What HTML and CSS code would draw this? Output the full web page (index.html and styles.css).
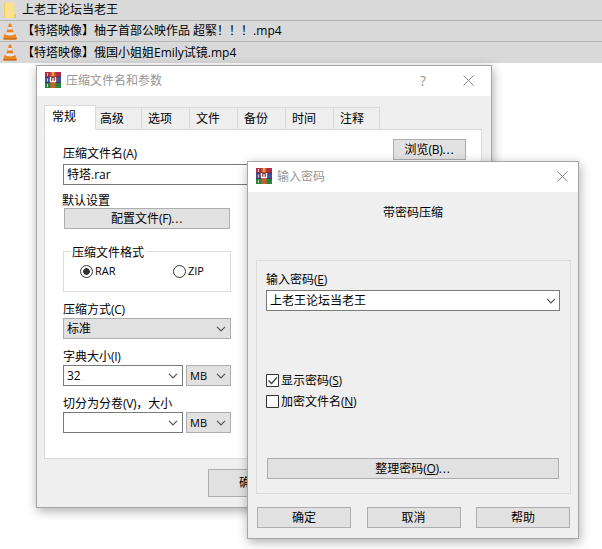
FILE: index.html
```html
<!DOCTYPE html>
<html lang="zh-CN">
<head>
<meta charset="utf-8">
<title>压缩文件名和参数</title>
<link rel="stylesheet" href="styles.css">
</head>
<body>
<svg class="defs" width="0" height="0" aria-hidden="true">
  <symbol id="cone" viewBox="0 0 14 17">
    <path d="M1.300 11.300h11.400l1.100 4.200q-.2.900-1 .9H1.200q-.8 0-1-.9z" fill="#ee8a22"/>
    <path d="M.3 15h13.400l-.3 1.400H.6z" fill="#cf6a14"/>
    <path d="M6 .8q1-.7 2 0l3.400 11.800q-4.400 2.200-8.800 0z" fill="#e87d22"/>
    <path d="M5.100 3.900h3.800l.8 2.700H4.300zM3.500 9.200h7l.8 2.600q-4.300 1.500-8.600 0z" fill="#e9e6e2"/>
  </symbol>
  <symbol id="rar" viewBox="0 0 16 16">
    <path d="M0 0h16v5H0z" fill="#b32c4c"/>
    <path d="M0 5h16v6H0z" fill="#4350a5"/>
    <path d="M0 11h16v5H0z" fill="#27853e"/>
    <path d="M0 5h16M0 10.500h16" stroke="#3a2f45" stroke-width=".8"/>
    <path d="M2.500 1v3M2.500 6.500v3M2.500 12v3" stroke="#dccfb4"/>
    <path d="M5.500 0h5v16h-5z" fill="#c8622a"/>
    <path d="M7 0h2v4H7z" fill="#f0a24a"/>
    <path d="M4.500 4.500h7v6h-7z" fill="#8d3a34"/>
    <path d="M5.500 5v4.500h5V5M8 6v3.500" fill="none" stroke="#f5eee8" stroke-width="1.300"/>
  </symbol>
  <symbol id="close" viewBox="0 0 11 11">
    <path d="M.5.5l10 10M10.500.5l-10 10" fill="none" stroke="#888" stroke-width="1"/>
  </symbol>
  <symbol id="chev" viewBox="0 0 10 6">
    <path d="M1 .8l4 4 4-4" fill="none" stroke="#555" stroke-width="1.200"/>
  </symbol>
</svg>

<ul class="files">
  <li class="file"><svg class="file-icon" viewBox="0 0 14 17"><path d="M1 .5h10.500v12H13V16H1z" fill="#f9e08a"/><path d="M11 12h2v4h-2z" fill="#ebc75c"/><path d="M1 .5h1V16H1z" fill="#efd06c"/></svg><span>上老王论坛当老王</span></li>
  <li class="file"><svg class="file-icon"><use href="#cone"/></svg><span>【特塔映像】柚子首部公映作品 超緊！！！.mp4</span></li>
  <li class="file"><svg class="file-icon"><use href="#cone"/></svg><span>【特塔映像】俄国小姐姐Emily试镜.mp4</span></li>
</ul>

<section class="window archive">
  <header class="titlebar">
    <svg class="app-icon"><use href="#rar"/></svg><h1 class="title">压缩文件名和参数</h1>
    <span class="help">?</span><svg class="close"><use href="#close"/></svg>
  </header>
  <nav class="tabs">
    <span class="tab active">常规</span><span class="tab">高级</span><span class="tab">选项</span><span class="tab">文件</span><span class="tab">备份</span><span class="tab">时间</span><span class="tab last">注释</span>
  </nav>
  <div class="panel">
    <div class="name-row"><span class="label">压缩文件名<span class="key">(A)</span></span><button class="btn browse"><span>浏览<span class="key">(B)</span><span class="dots">...</span></span></button></div>
    <div class="box name">特塔.rar</div>
    <div class="column">
      <span class="label profile-label">默认设置</span>
      <button class="btn profile"><span>配置文件<span class="key">(F)</span><span class="dots">...</span></span></button>
      <div class="format">
        <span class="legend">压缩文件格式</span>
        <div class="radios">
          <span class="option"><i class="radio on"></i>RAR</span>
          <span class="option"><i class="radio"></i>ZIP</span>
        </div>
      </div>
      <span class="label">压缩方式<span class="key">(C)</span></span>
      <div class="box grey">标准<svg class="chev"><use href="#chev"/></svg></div>
      <span class="label">字典大小<span class="key">(I)</span></span>
      <div class="pair"><div class="box">32<svg class="chev"><use href="#chev"/></svg></div><div class="box grey unit">MB<svg class="chev"><use href="#chev"/></svg></div></div>
      <span class="label">切分为分卷<span class="key">(V)</span>，大小</span>
      <div class="pair"><div class="box"><svg class="chev"><use href="#chev"/></svg></div><div class="box grey unit">MB<svg class="chev"><use href="#chev"/></svg></div></div>
    </div>
  </div>
  <footer class="archive-actions"><button class="btn">确定</button></footer>
</section>

<section class="window password">
  <header class="titlebar">
    <svg class="app-icon"><use href="#rar"/></svg><h1 class="title">输入密码</h1>
    <svg class="close"><use href="#close"/></svg>
  </header>
  <p class="heading">带密码压缩</p>
  <div class="group">
    <span class="label">输入密码<span class="key">(<u>E</u>)</span></span>
    <div class="box">上老王论坛当老王<svg class="chev"><use href="#chev"/></svg></div>
    <div class="checks">
      <span class="option"><svg class="check" viewBox="0 0 13 13"><path d="M2.500 6.500l3 3 5.500-6" fill="none" stroke="#444" stroke-width="1.300"/><path d="M.5.5h12v12H.5z" fill="none" stroke="#333"/></svg><span>显示密码<span class="key">(<u>S</u>)</span></span></span>
      <span class="option"><svg class="check" viewBox="0 0 13 13"><path d="M.5.5h12v12H.5z" fill="none" stroke="#333"/></svg><span>加密文件名<span class="key">(<u>N</u>)</span></span></span>
    </div>
    <button class="btn organize"><span>整理密码<span class="key">(<u>O</u>)</span><span class="dots">...</span></span></button>
  </div>
  <footer class="actions"><button class="btn">确定</button><button class="btn">取消</button><button class="btn">帮助</button></footer>
</section>
</body>
</html>
```
FILE: styles.css
```css
* { box-sizing: border-box; }
body {
  margin: 0;
  height: 549px;
  overflow: hidden;
  position: relative;
  background: #fff;
  color: #000;
  font: 12px/18px "Open Sans", "Noto Sans CJK SC", sans-serif;
  white-space: nowrap;
}
svg { display: block; flex: none; }
.defs { position: absolute; }
u { text-underline-offset: 1px; text-decoration-thickness: 1px; }
.key { letter-spacing: -.3px; }
.dots { letter-spacing: .8px; }

.files { list-style: none; margin: 0; padding: 0; background: #d8d9d8; }
.file {
  display: flex;
  align-items: center;
  gap: 5px;
  height: 21px;
  padding-left: 3px;
  border-bottom: 1px solid #b4b7b6;
}
.file:last-child { border-bottom: 0; }
.file-icon { width: 14px; height: 17px; }

.window {
  position: absolute;
  background: #efefef;
  border: 1px solid #a6a6a6;
  box-shadow: 1px 3px 10px rgba(0, 0, 0, .32);
}
.archive { left: 36px; top: 65px; width: 456px; height: 443px; }
.password { left: 247px; top: 161px; width: 332px; height: 378px; }
.titlebar {
  display: flex;
  align-items: center;
  height: 30px;
  padding: 0 10px 0 8px;
  background: #fff;
  color: #969696;
}
.app-icon { width: 16px; height: 16px; margin: -2px 5px 0 0; }
.title { margin: 0; font-size: 12px; font-weight: 400; }
.help { margin-left: auto; margin-right: 37px; font-size: 14px; }
.close { width: 11px; height: 11px; margin-top: -2px; }
.archive .close { margin-right: 7px; }
.password .close { margin-left: auto; }

.tabs { display: flex; align-items: flex-end; margin: 9px 0 -1px 7px; height: 25px; position: relative; }
.tab {
  width: 48px;
  height: 23px;
  padding: 2px 0 0 6px;
  border: 1px solid #dadada;
  border-left: 0;
}
.tab.active { width: 52px; height: 25px; padding: 2px 0 0 7px; background: #fff; border-left: 1px solid #dadada; border-bottom-color: #fff; }
.tab:nth-child(2) { width: 46px; padding-left: 4px; }
.tab.last { width: 46px; }

.panel {
  width: 438px;
  height: 330px;
  margin-left: 7px;
  padding: 9px 15px 0 18px;
  background: #fff;
  border: 1px solid #dadada;
}
.label { display: block; height: 18px; padding-top: 1px; }
.name-row { display: flex; justify-content: space-between; height: 25px; align-items: flex-start; }
.name-row .label { padding-top: 6px; }
.btn {
  display: flex;
  align-items: center;
  justify-content: center;
  height: 21px;
  margin: 0;
  padding: 0;
  background: #e1e1e1;
  border: 1px solid #adadad;
  color: #000;
  font: inherit;
}
.panel .btn, .organize { padding-top: 1px; }
.browse { width: 73px; }
.box {
  display: flex;
  align-items: center;
  flex: 1;
  height: 21px;
  padding: 0 4px 0 3px;
  background: #fff;
  border: 1px solid #7a7a7a;
}
.name { width: 402px; }
.chev { width: 10px; height: 6px; margin-left: auto; }
.grey { background: #e1e1e1; border-color: #adadad; }
.column { width: 168px; padding-top: 5px; }
.profile { width: 166px; margin-left: 1px; }
.profile-label { margin-left: -1px; padding-top: 2px; }
.format { height: 41px; margin: 22px 0 8px; border: 1px solid #dcdcdc; }
.legend {
  display: block;
  width: max-content;
  height: 18px;
  margin: -8px 0 0 6px;
  padding: 0 2px;
  background: #fff;
}
.radios { display: flex; padding-left: 16px; font-size: 11px; }
.radios .option { flex: none; width: 93px; height: 18px; }
.radios .option:last-child { width: 50px; }
.option { display: flex; align-items: center; gap: 2px; height: 21px; }
.radio { width: 13px; height: 13px; border: 1px solid #333; border-radius: 50%; background: #fff; }
.radio.on { background: radial-gradient(circle, #333 3px, #fff 3.700px); }
.column > .box { height: 21px; margin-bottom: 8px; }
.pair { display: flex; gap: 3px; margin-bottom: 8px; }
.unit { flex: 0 0 45px; font-size: 11px; }
.archive-actions { padding: 10px 0 0 171px; }
.archive-actions .btn { width: 86px; height: 28px; }

.heading { margin: 12px 0 38px; text-align: center; height: 18px; }
.group { height: 234px; margin: 0 7px 0 8px; padding: 10px 10px 0 9px; border: 1px solid #dcdcdc; }
.group .label { height: 19px; padding-top: 0; }
.group .chev { margin-right: -1px; }
.checks { padding: 59px 0 46px; }
.checks .option { gap: 2px; }
.check { width: 13px; height: 13px; background: #fff; }
.organize { width: 292px; margin-left: 1px; }
.actions { display: flex; justify-content: space-between; padding: 13px 8px 0 9px; }
.actions .btn { width: 94px; padding-top: 1px; }
```
